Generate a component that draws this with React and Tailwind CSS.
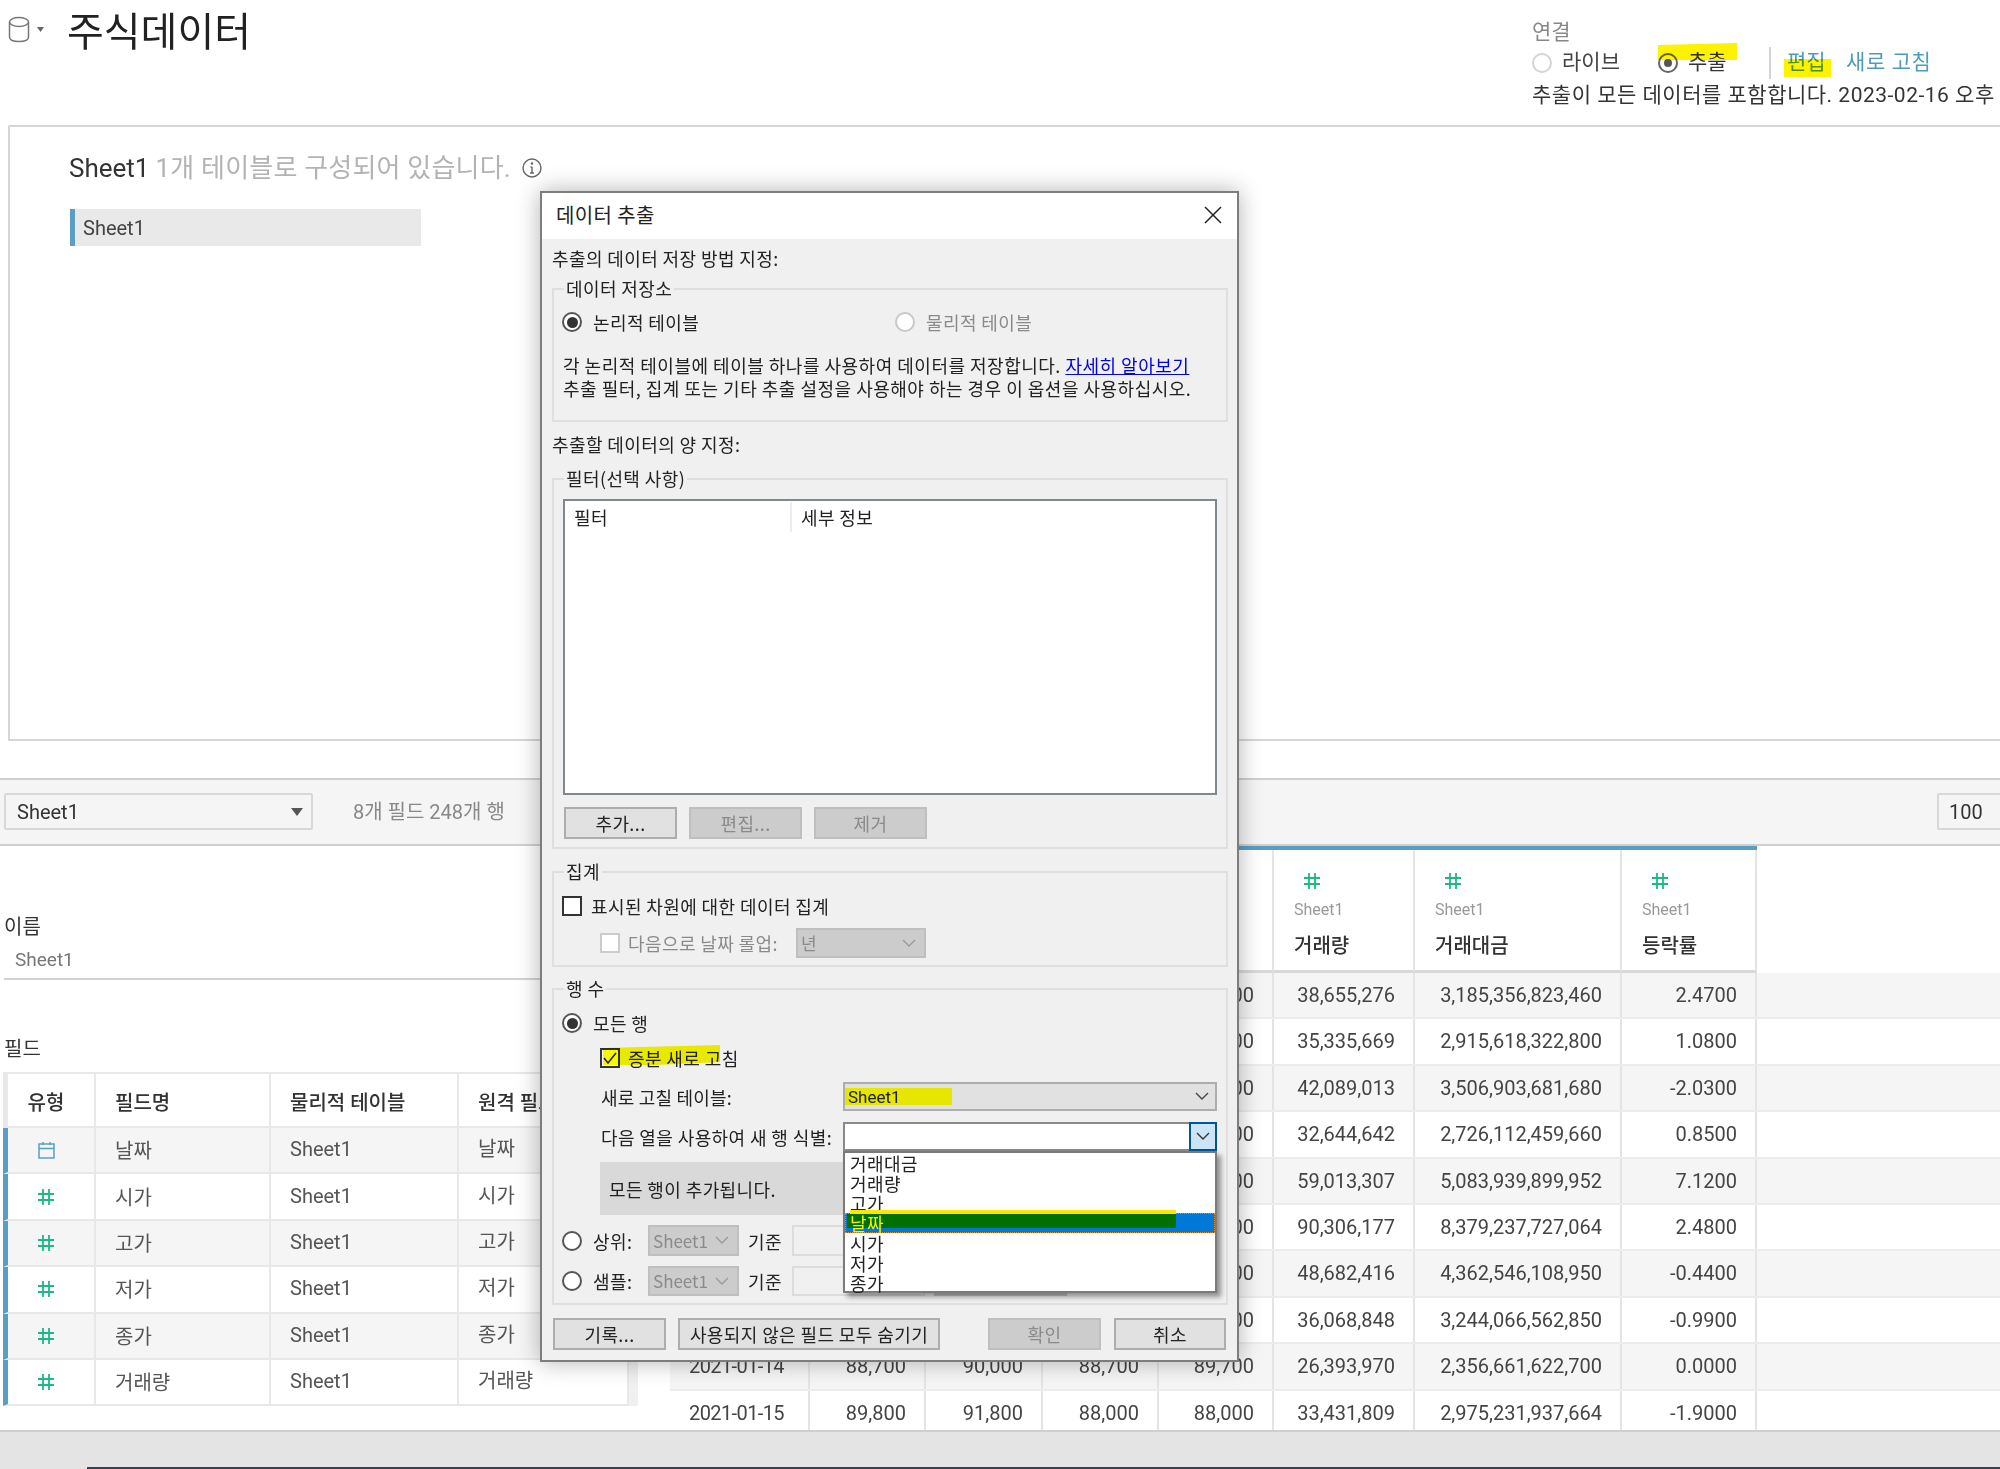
const Hash = ({ className = "" }) => (
  <svg width="16" height="18" viewBox="0 0 16 18" className={className} fill="none" stroke="#1db88a" strokeWidth="1.8">
    <path d="M5 1v16M11 1v16M0 6h16M0 12h16" />
  </svg>
);

const Calendar = () => (
  <svg width="17" height="18" viewBox="0 0 17 18" fill="none" stroke="#5a9ec4" strokeWidth="1.5">
    <rect x="1" y="3" width="15" height="14" />
    <path d="M1 7.5h15M5 1v3M12 1v3" />
  </svg>
);

const Chevron = ({ color = "#444", className = "" }) => (
  <svg width="14" height="9" viewBox="0 0 14 9" fill="none" stroke={color} strokeWidth="1.4" className={className}>
    <path d="M1 1l6 6 6-6" />
  </svg>
);

const Radio = ({ on = false, disabled = false }) => (
  <span className={`flex h-[20px] w-[20px] shrink-0 items-center justify-center rounded-full border-2 bg-white ${disabled ? "border-[#c8c8c8]" : "border-[#555555]"}`}>
    {on && <span className="h-[11px] w-[11px] rounded-full bg-[#333333]" />}
  </span>
);

const HeaderRadio = ({ on = false }) => (
  <span className={`flex h-[20px] w-[20px] shrink-0 items-center justify-center rounded-full border-2 ${on ? "border-[#666666]" : "border-[#d4d4d4]"}`}>
    {on && <span className="h-[8px] w-[8px] rounded-full bg-[#555555]" />}
  </span>
);

const Group = ({ label, height, className = "", children }) => (
  <div className={`relative border-2 border-[#dfdfdf] ${height} ${className}`}>
    <span className="absolute -top-[14px] left-[10px] bg-[#f0f0f0] px-[2px] text-[18px] leading-[24px]">{label}</span>
    {children}
  </div>
);

const Btn = ({ children, disabled = false, width }) => (
  <div className={`flex h-[32px] shrink-0 items-center justify-center border-2 text-[18px] ${width} ${disabled ? "border-[#bfbfbf] bg-[#cccccc] text-[#8a8a8a]" : "border-[#adadad] bg-[#e1e1e1] text-[#222222]"}`}>
    {children}
  </div>
);

const DisabledSelect = ({ text, width, height = "h-[30px]" }) => (
  <div className={`flex shrink-0 items-center justify-between border-2 border-[#bfbfbf] bg-[#cccccc] pl-[3px] pr-[8px] text-[17px] tracking-normal text-[#8a8a8a] ${width} ${height}`}>
    <span>{text}</span>
    <Chevron color="#9a9a9a" />
  </div>
);

const fieldRows = [
  { icon: "date", name: "날짜" },
  { icon: "num", name: "시가" },
  { icon: "num", name: "고가" },
  { icon: "num", name: "저가" },
  { icon: "num", name: "종가" },
  { icon: "num", name: "거래량" },
];

const widths = ["w-[140px]", "w-[116px]", "w-[117px]", "w-[116px]", "w-[115px]", "w-[141px]", "w-[207px]", "w-[135px]"];
const heads = ["", "", "", "", "", "거래량", "거래대금", "등락률"];

const dataRows = [
  ["", "", "", "", "83,000", "38,655,276", "3,185,356,823,460", "2.4700"],
  ["", "", "", "", "83,900", "35,335,669", "2,915,618,322,800", "1.0800"],
  ["", "", "", "", "82,200", "42,089,013", "3,506,903,681,680", "-2.0300"],
  ["", "", "", "", "82,900", "32,644,642", "2,726,112,459,660", "0.8500"],
  ["", "", "", "", "88,800", "59,013,307", "5,083,939,899,952", "7.1200"],
  ["", "", "", "", "91,000", "90,306,177", "8,379,237,727,064", "2.4800"],
  ["", "", "", "", "90,600", "48,682,416", "4,362,546,108,950", "-0.4400"],
  ["", "", "", "", "89,700", "36,068,848", "3,244,066,562,850", "-0.9900"],
  ["2021-01-14", "88,700", "90,000", "88,700", "89,700", "26,393,970", "2,356,661,622,700", "0.0000"],
  ["2021-01-15", "89,800", "91,800", "88,000", "88,000", "33,431,809", "2,975,231,937,664", "-1.9000"],
];

const dropItems = ["거래대금", "거래량", "고가", "날짜", "시가", "저가", "종가"];

function Dialog() {
  return (
    <div className="absolute left-[540px] top-[191px] flex h-[1171px] w-[699px] flex-col border-2 border-[#7d7d7d] bg-[#f0f0f0] font-['Noto_Sans_CJK_KR','Roboto',sans-serif] text-[18px] leading-[24px] tracking-[0.4px] text-[#222222] shadow-[0_0_22px_rgba(0,0,0,0.3)]">
      <div className="flex h-[46px] shrink-0 items-center justify-between bg-white pb-[3px] pl-[14px] pr-[15px]">
        <span className="text-[20px]">데이터 추출</span>
        <svg width="18" height="18" viewBox="0 0 18 18" fill="none" stroke="#222222" strokeWidth="1.5">
          <path d="M1 1l16 16M17 1L1 17" />
        </svg>
      </div>

      <div className="flex flex-col pl-[10px] pr-[9px]">
        <div className="mt-[7px] h-[24px]">추출의 데이터 저장 방법 지정:</div>

        <Group label="데이터 저장소" height="mt-[18px] h-[134px]">
          <div className="mt-[20px] flex h-[24px] items-center pl-[8px]">
            <div className="flex w-[333px] items-center gap-[11px]">
              <Radio on />
              <span>논리적 테이블</span>
            </div>
            <div className="flex items-center gap-[11px] text-[#8a8a8a]">
              <Radio disabled />
              <span>물리적 테이블</span>
            </div>
          </div>
          <div className="mt-[20px] pl-[9px] leading-[23px] tracking-[0.5px] whitespace-nowrap">
            <div>
              각 논리적 테이블에 테이블 하나를 사용하여 데이터를 저장합니다.{" "}
              <span className="text-[#0000ee] underline">자세히 알아보기</span>
            </div>
            <div>추출 필터, 집계 또는 기타 추출 설정을 사용해야 하는 경우 이 옵션을 사용하십시오.</div>
          </div>
        </Group>

        <div className="mt-[10px] h-[24px]">추출할 데이터의 양 지정:</div>

        <Group label="필터(선택 사항)" height="mt-[22px] h-[371px]">
          <div className="ml-[9px] mr-[9px] mt-[19px] h-[296px] border-2 border-[#7c8a90] bg-white">
            <div className="flex h-[32px] items-center">
              <span className="w-[225px] pl-[9px]">필터</span>
              <span className="h-[30px] border-l-2 border-[#ececec] pl-[9px] leading-[30px]">세부 정보</span>
            </div>
          </div>
          <div className="ml-[10px] mt-[12px] flex gap-[12px]">
            <Btn width="w-[113px]">추가...</Btn>
            <Btn width="w-[113px]" disabled>편집...</Btn>
            <Btn width="w-[113px]" disabled>제거</Btn>
          </div>
        </Group>

        <Group label="집계" height="mt-[22px] h-[96px]">
          <div className="mt-[21px] flex h-[24px] items-center gap-[9px] pl-[8px]">
            <span className="h-[20px] w-[20px] border-2 border-[#333333] bg-white" />
            <span>표시된 차원에 대한 데이터 집계</span>
          </div>
          <div className="mt-[10px] flex h-[30px] items-center pl-[46px] text-[#8a8a8a]">
            <span className="h-[20px] w-[20px] border-2 border-[#cccccc] bg-white" />
            <span className="ml-[8px] w-[168px] whitespace-nowrap">다음으로 날짜 롤업:</span>
            <DisabledSelect text="년" width="w-[130px]" />
          </div>
        </Group>

        <Group label="행 수" height="mt-[21px] h-[317px]">
          <div className="mt-[21px] flex h-[24px] items-center gap-[11px] pl-[8px]">
            <Radio on />
            <span>모든 행</span>
          </div>
          <div className="mt-[11px] flex h-[24px] items-center gap-[8px] pl-[46px]">
            <span className="flex h-[20px] w-[20px] items-center justify-center border-2 border-[#333333] bg-white">
              <svg width="14" height="12" viewBox="0 0 14 12" fill="none" stroke="#222222" strokeWidth="1.5">
                <path d="M1 6l4 5 8-10" />
              </svg>
            </span>
            <span>증분 새로 고침</span>
          </div>
          <div className="mt-[12px] flex h-[29px] items-center pl-[47px]">
            <span className="w-[242px] tracking-[0.2px]">새로 고칠 테이블:</span>
            <div className="flex h-[29px] w-[374px] items-center justify-between border-2 border-[#adadad] bg-[#e1e1e1] pr-[6px]">
              <span className="flex h-[17px] w-[107px] items-center bg-[#e6e600] pl-[3px] font-['Roboto','Noto_Sans_CJK_KR',sans-serif] text-[17px] tracking-normal">Sheet1</span>
              <Chevron />
            </div>
          </div>
          <div className="mt-[11px] flex h-[29px] items-center pl-[47px]">
            <span className="w-[242px] whitespace-nowrap">다음 열을 사용하여 새 행 식별:</span>
            <div className="flex h-[29px] w-[374px] justify-end border-2 border-[#8a8a8a] bg-white">
              <div className="-my-[2px] -mr-[2px] flex w-[28px] items-center justify-center border-2 border-[#005499] bg-[#cce4f7]">
                <Chevron color="#333333" />
              </div>
            </div>
          </div>
          <div className="ml-[46px] mt-[11px] flex h-[53px] w-[300px] items-center bg-[#d9d9d9] pl-[9px]">모든 행이 추가됩니다.</div>
          <div className="mt-[10px] flex h-[31px] items-center pl-[8px]">
            <Radio />
            <span className="ml-[11px] w-[55px]">상위:</span>
            <DisabledSelect text="Sheet1" width="w-[91px]" height="h-[31px]" />
            <span className="ml-[9px] w-[44px]">기준</span>
            <div className="h-[31px] w-[133px] border-2 border-[#dcdcdc] bg-[#f0f0f0]" />
            <div className="ml-[9px] h-[31px] w-[133px] border-2 border-[#dcdcdc] bg-[#f0f0f0]" />
          </div>
          <div className="mt-[10px] flex h-[30px] items-center pl-[8px]">
            <Radio />
            <span className="ml-[11px] w-[55px]">샘플:</span>
            <DisabledSelect text="Sheet1" width="w-[91px]" />
            <span className="ml-[9px] w-[44px]">기준</span>
            <div className="h-[30px] w-[133px] border-2 border-[#dcdcdc] bg-[#f0f0f0]" />
            <div className="ml-[9px] h-[30px] w-[133px] border-2 border-[#c8c8c8] bg-[#cccccc]" />
          </div>
        </Group>

        <div className="ml-[1px] mt-[13px] flex">
          <Btn width="w-[113px]">기록...</Btn>
          <div className="ml-[12px]">
            <Btn width="w-[262px]">사용되지 않은 필드 모두 숨기기</Btn>
          </div>
          <div className="ml-[48px]">
            <Btn width="w-[113px]" disabled>확인</Btn>
          </div>
          <div className="ml-[13px]">
            <Btn width="w-[112px]">취소</Btn>
          </div>
        </div>
      </div>

      <div className="absolute left-[61px] top-[852px] h-[20px] w-[117px] bg-[#f7f700] mix-blend-multiply [clip-path:polygon(0_15%,100%_0,100%_85%,45%_100%,0_100%)]" />

      <div className="absolute left-[301px] top-[958px] flex h-[142px] w-[374px] flex-col border-2 border-[#7a7a7a] bg-white text-[18px] leading-[20px] shadow-[4px_4px_5px_rgba(0,0,0,0.4)]">
        {dropItems.map((item) =>
          item === "날짜" ? (
            <div key={item} className="relative h-[20px] shrink-0 border border-dotted border-[#e08a30] bg-[#0078d7] pl-[4px] text-[#f5f500]">
              <div className="absolute left-[1px] top-[0px] h-[14px] w-[329px] bg-[#007000]" />
              <div className="absolute -top-[4px] left-[4px] h-[4px] w-[326px] bg-[#ffe600]" />
              <span className="relative -top-[1px]">{item}</span>
            </div>
          ) : (
            <div key={item} className="h-[20px] shrink-0 pl-[5px]">{item}</div>
          )
        )}
      </div>
    </div>
  );
}

export default function App() {
  return (
    <div className="relative flex h-[1469px] w-[2000px] flex-col overflow-hidden bg-white font-['Roboto','Noto_Sans_CJK_KR',sans-serif] text-[#333333]">
      <header className="flex h-[125px] shrink-0">
        <svg width="22" height="27" viewBox="0 0 22 27" fill="none" stroke="#777777" strokeWidth="1.5" className="ml-[8px] mt-[16px]">
          <ellipse cx="11" cy="6" rx="9.5" ry="4.5" />
          <path d="M1.5 6v15c0 3 4 4.5 9.5 4.5s9.5-1.500 9.500-4.500V6" />
        </svg>
        <svg width="7" height="5" viewBox="0 0 7 5" fill="#666666" className="ml-[7px] mt-[27px]">
          <path d="M0 0h7L3.500 5z" />
        </svg>
        <div className="ml-[23px] mt-[7px] text-[40px] font-normal leading-[52px] text-[#222222]">주식데이터</div>
        <div className="ml-auto w-[468px] shrink-0 whitespace-nowrap pt-[20px] text-[21px]">
          <div className="h-[24px] leading-[24px] text-[#888888]">연결</div>
          <div className="relative flex h-[34px] items-center pt-[3px]">
            <HeaderRadio />
            <span className="ml-[10px] w-[96px] text-[#444444]">라이브</span>
            <HeaderRadio on />
            <span className="ml-[10px] w-[81px] text-[#333333]">추출</span>
            <span className="h-[32px] w-[2px] bg-[#d4d4d4]" />
            <span className="ml-[16px] w-[59px] text-[#4d9cc0]">편집</span>
            <span className="tracking-[0.6px] text-[#4d9cc0]">새로 고침</span>
            <div className="absolute left-[126px] top-[-1px] h-[17px] w-[79px] bg-[#fff200] mix-blend-multiply [clip-path:polygon(0_12%,100%_0,100%_100%,0_100%)]" />
            <div className="absolute left-[252px] top-[15px] h-[18px] w-[47px] bg-[#fff200] mix-blend-multiply" />
          </div>
          <div className="h-[34px] leading-[34px] tracking-[0.5px]">추출이 모든 데이터를 포함합니다. 2023-02-16 오후</div>
        </div>
      </header>

      <section className="ml-[8px] h-[616px] shrink-0 rounded-tl-[2px] border-2 border-r-0 border-[#d6d6d6] pl-[59px] pt-[25px]">
        <div className="flex h-[32px] items-center text-[26px] leading-[32px]">
          <span className="text-[#333333]">Sheet1</span>
          <span className="ml-[6px] tracking-[0.2px] text-[#b3b3b3]">1개 테이블로 구성되어 있습니다.</span>
          <svg width="20" height="20" viewBox="0 0 20 20" fill="none" stroke="#666666" strokeWidth="1.4" className="ml-[11px]">
            <circle cx="10" cy="10" r="9" />
            <path d="M10 9v6M8 15h4M8.500 9H10" />
            <circle cx="10" cy="5.500" r="0.6" fill="#666666" />
          </svg>
        </div>
        <div className="ml-[1px] mt-[25px] flex h-[37px] w-[351px] items-center border-l-[5px] border-[#5a9ec4] bg-[#e9e9e9] pl-[8px] text-[20px] text-[#444444]">Sheet1</div>
      </section>

      <div className="h-[37px] shrink-0" />

      <div className="flex h-[68px] shrink-0 items-start border-y-2 border-[#cfcfcf] bg-[#f5f5f5] pt-[13px]">
        <div className="ml-[4px] flex h-[37px] w-[309px] items-center justify-between rounded-[2px] border-2 border-[#d8d8d8] pl-[11px] pr-[8px] text-[20px] text-[#333333]">
          <span>Sheet1</span>
          <svg width="12" height="8" viewBox="0 0 12 8" fill="#555555"><path d="M0 0h12L6 8z" /></svg>
        </div>
        <span className="ml-[40px] mt-[5px] text-[20px] leading-[28px] text-[#888888]">8개 필드 248개 행</span>
        <div className="ml-auto flex h-[37px] w-[63px] items-center rounded-l-[2px] border-2 border-r-0 border-[#d8d8d8] pl-[10px] text-[20px]">100</div>
      </div>

      <main className="flex h-[584px] shrink-0 overflow-hidden">
        <div className="w-[670px] shrink-0 pl-[3px]">
          <div className="mt-[67px] h-[28px] pl-[1px] text-[20px] leading-[28px] text-[#333333]">이름</div>
          <div className="mt-[5px] h-[28px] pl-[12px] text-[19px] leading-[28px] text-[#777777]">Sheet1</div>
          <div className="ml-[1px] mt-[4px] h-[2px] bg-[#d2d2d2]" />
          <div className="mt-[55px] h-[28px] pl-[1px] text-[20px] leading-[28px] text-[#333333]">필드</div>
          <div className="mt-[9px] w-[635px] border-r-[9px] border-[#f0f0f0]">
            <div className="flex h-[56px] border-y-2 border-l-[5px] border-[#e8e8e8] text-[20px] font-medium">
              <span className="flex w-[88px] items-center justify-center border-r-2 border-[#e8e8e8] pr-[10px] pt-[5px]">유형</span>
              <span className="flex w-[175px] items-center border-r-2 border-[#e8e8e8] pl-[19px] pt-[5px]">필드명</span>
              <span className="flex w-[188px] items-center border-r-2 border-[#e8e8e8] pl-[19px] pt-[5px]">물리적 테이블</span>
              <span className="flex flex-1 items-center border-r-2 border-[#e8e8e8] pl-[19px] pt-[5px] whitespace-nowrap">원격 필드 이름</span>
            </div>
            {fieldRows.map((r, i) => (
              <div key={r.name} className={`flex h-[46.400px] border-b-2 border-l-[5px] border-b-[#e8e8e8] border-l-[#5a9ec4] text-[20px] text-[#555555] ${i % 2 === 0 ? "bg-[#f5f5f5]" : "bg-white"}`}>
                <span className="flex w-[88px] items-center justify-center border-r-2 border-[#e8e8e8] pr-[10px]">
                  {r.icon === "date" ? <Calendar /> : <Hash />}
                </span>
                <span className="flex w-[175px] items-center border-r-2 border-[#e8e8e8] pl-[19px] pt-[2px]">{r.name}</span>
                <span className="flex w-[188px] items-center border-r-2 border-[#e8e8e8] pb-[2px] pl-[19px]">Sheet1</span>
                <span className="flex flex-1 items-center border-r-2 border-[#e8e8e8] pb-[2px] pl-[19px]">{r.name}</span>
              </div>
            ))}
          </div>
        </div>

        <div className="min-w-0 flex-1">
          <div className="flex h-[127px]">
            {heads.map((h, i) => (
              <div key={i} className={`h-full shrink-0 border-b-[3px] border-r-2 border-b-[#d8d8d8] border-r-[#e4e4e4] ${widths[i]}`}>
                <div className="-mr-[2px] h-[4px] bg-[#5a9ec4]" />
                {h && (
                  <>
                    <div className="pl-[20px] pt-[22px]"><Hash className="ml-[10px]" /></div>
                    <div className="mt-[9px] pl-[20px] text-[16px] leading-[22px] text-[#999999]">Sheet1</div>
                    <div className="mt-[11px] pl-[20px] text-[20px] font-medium leading-[28px] text-[#333333]">{h}</div>
                  </>
                )}
              </div>
            ))}
          </div>
          <div className="h-[457px] overflow-hidden">
            {dataRows.map((row, ri) => (
              <div key={ri} className={`flex h-[46.400px] border-b-2 border-[#ececec] text-[20px] leading-[44px] text-[#444444] ${ri % 2 === 0 ? "bg-[#f5f5f5]" : "bg-white"}`}>
                {row.map((v, ci) => (
                  <div key={ci} className={`shrink-0 border-r-2 border-[#e4e4e4] ${widths[ci]} ${ci === 0 ? "pl-[19px] text-left tracking-[-0.6px]" : "pr-[18px] text-right"}`}>{v}</div>
                ))}
              </div>
            ))}
          </div>
        </div>
      </main>

      <footer className="flex h-[39px] shrink-0 flex-col justify-end border-t-2 border-[#cfcfcf] bg-[#e4e4e4]">
        <div className="ml-[87px] h-[2px] bg-[#38424a]" />
      </footer>

      <Dialog />
    </div>
  );
}
